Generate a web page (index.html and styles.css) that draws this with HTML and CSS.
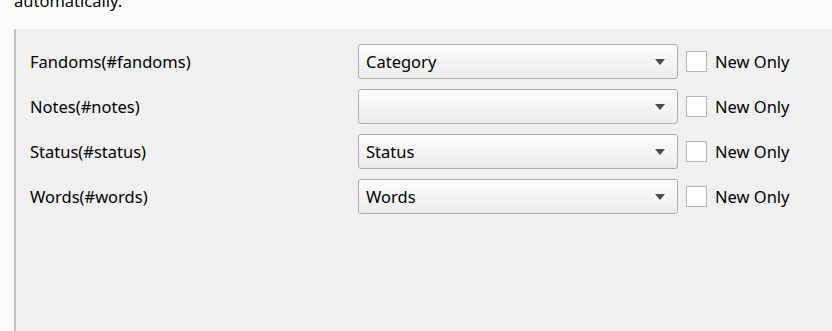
FILE: index.html
```html
<!DOCTYPE html>
<html>
<head>
<meta charset="utf-8">
<link rel="stylesheet" href="styles.css">
</head>
<body>
<div class="intro"><p>automatically.</p></div>
<div class="panel">
  <div class="row">
    <span class="label">Fandoms(#fandoms)</span>
    <div class="combo"><span class="value">Category</span><span class="arrow"></span></div>
    <label class="check"><span class="box"></span>New Only</label>
  </div>
  <div class="row">
    <span class="label">Notes(#notes)</span>
    <div class="combo"><span class="value"></span><span class="arrow"></span></div>
    <label class="check"><span class="box"></span>New Only</label>
  </div>
  <div class="row">
    <span class="label">Status(#status)</span>
    <div class="combo"><span class="value">Status</span><span class="arrow"></span></div>
    <label class="check"><span class="box"></span>New Only</label>
  </div>
  <div class="row">
    <span class="label">Words(#words)</span>
    <div class="combo"><span class="value">Words</span><span class="arrow"></span></div>
    <label class="check"><span class="box"></span>New Only</label>
  </div>
</div>
</body>
</html>
```
FILE: styles.css
```css
html, body {
  margin: 0;
  padding: 0;
  height: 100%;
  background: #fcfcfc;
  font-family: "Noto Sans", "Open Sans", sans-serif;
  font-size: 16.5px;
  color: #000;
  overflow: hidden;
}
.intro {
  height: 29px;
  overflow: hidden;
  padding-left: 14px;
}
.intro p {
  margin: -11px 0 0 0;
  line-height: 24px;
}
.panel {
  margin-left: 14px;
  border-left: 2px solid #c4c4c4;
  background: #f0f0f0;
  height: calc(100% - 29px);
  padding: 15px 0 0 14px;
  box-sizing: border-box;
  display: flex;
  flex-direction: column;
  gap: 10px;
}
.row {
  display: flex;
  align-items: center;
  height: 35px;
}
.label {
  width: 328px;
}
.combo {
  width: 320px;
  height: 35px;
  box-sizing: border-box;
  border: 1px solid #adadad;
  border-radius: 3px;
  background: linear-gradient(#fdfdfd, #ececec);
  display: flex;
  align-items: center;
  padding: 0 12px 0 7px;
}
.value {
  flex: 1;
}
.arrow {
  width: 0;
  height: 0;
  border-left: 5px solid transparent;
  border-right: 5px solid transparent;
  border-top: 6px solid #4a4a4a;
}
.check {
  display: flex;
  align-items: center;
  margin-left: 8px;
}
.box {
  width: 19px;
  height: 19px;
  border: 1px solid #b5b5b5;
  background: #fff;
  margin-right: 8px;
}
```
